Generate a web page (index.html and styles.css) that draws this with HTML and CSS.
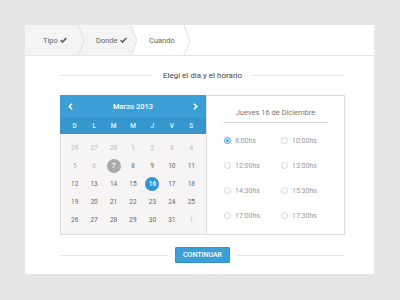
FILE: index.html
```html
<!DOCTYPE html>
<html lang="es">
<head>
<meta charset="utf-8">
<link rel="stylesheet" href="styles.css">
</head>
<body>
<div class="card">
  <nav class="steps">
    <div class="step done">Tipo <svg class="check" width="7" height="6" viewBox="0 0 7 6"><path d="M0.7 3.2 L2.6 5 L6.3 0.9" fill="none" stroke="#555" stroke-width="1.5"/></svg>
      <svg class="chev" width="7" height="31" viewBox="0 0 7 31"><polygon points="0,0 6,15.5 0,31" fill="#f5f4f4"/><polyline points="0,0 6,15.5 0,31" fill="none" stroke="#e0dede" stroke-width="1"/></svg>
    </div>
    <div class="step done">Donde <svg class="check" width="7" height="6" viewBox="0 0 7 6"><path d="M0.7 3.2 L2.6 5 L6.3 0.9" fill="none" stroke="#555" stroke-width="1.5"/></svg>
      <svg class="chev" width="7" height="31" viewBox="0 0 7 31"><polygon points="0,0 6,15.5 0,31" fill="#f5f4f4"/><polyline points="0,0 6,15.5 0,31" fill="none" stroke="#e0dede" stroke-width="1"/></svg>
    </div>
    <div class="step">Cuando
      <svg class="chev" width="7" height="31" viewBox="0 0 7 31"><polygon points="0,0 6,15.5 0,31" fill="#ffffff"/><polyline points="0,0 6,15.5 0,31" fill="none" stroke="#e0dede" stroke-width="1"/></svg>
    </div>
  </nav>
  <div class="content">
    <div class="heading"><span class="rule"></span><h1>Elegi el día y el horario</h1><span class="rule"></span></div>
    <div class="picker">
      <div class="cal">
        <div class="cal-head">
          <svg width="5" height="7" viewBox="0 0 5 7"><path d="M4 0.8 L1.3 3.5 L4 6.2" fill="none" stroke="#fff" stroke-width="1.6"/></svg>
          <span class="month">Marzo 2013</span>
          <svg width="5" height="7" viewBox="0 0 5 7"><path d="M1 0.8 L3.7 3.5 L1 6.2" fill="none" stroke="#fff" stroke-width="1.6"/></svg>
        </div>
        <div class="cal-dow"><span>D</span><span>L</span><span>M</span><span>M</span><span>J</span><span>V</span><span>S</span></div>
        <div class="cal-grid">
          <span class="off">26</span><span class="off">27</span><span class="off">28</span><span class="off">1</span><span class="off">2</span><span class="off">3</span><span class="off">4</span>
          <span class="off">5</span><span class="off">6</span><span><b class="today">7</b></span><span>8</span><span>9</span><span>10</span><span>11</span>
          <span>12</span><span>13</span><span>14</span><span>15</span><span><b class="sel">16</b></span><span>17</span><span>18</span>
          <span>19</span><span>20</span><span>21</span><span>22</span><span>23</span><span>24</span><span>25</span>
          <span>26</span><span>27</span><span>28</span><span>29</span><span>30</span><span>31</span><span class="off">1</span>
        </div>
      </div>
      <div class="times">
        <div class="times-title">Jueves 16 de Diciembre</div>
        <div class="slots">
          <label class="slot"><i class="radio on"></i>8:00hs</label>
          <label class="slot"><i class="radio"></i>10:00hs</label>
          <label class="slot"><i class="radio"></i>12:00hs</label>
          <label class="slot"><i class="radio"></i>13:00hs</label>
          <label class="slot"><i class="radio"></i>14:30hs</label>
          <label class="slot"><i class="radio"></i>15:30hs</label>
          <label class="slot"><i class="radio"></i>17:00hs</label>
          <label class="slot"><i class="radio"></i>17:30hs</label>
        </div>
      </div>
    </div>
    <div class="actions"><span class="rule"></span><button class="btn">CONTINUAR</button><span class="rule"></span></div>
  </div>
</div>
</body>
</html>
```
FILE: styles.css
```css
body {
  margin: 0;
  background: #e6e6e6;
  font-family: Roboto, "Liberation Sans", sans-serif;
}
.card {
  margin: 25px 0 0 25px;
  width: 349px;
  height: 249px;
  background: #fff;
}
.steps {
  display: flex;
  height: 30px;
  border-bottom: 1px solid #e8e6e6;
}
.step {
  position: relative;
  width: 53px;
  padding-left: 18px;
  box-sizing: border-box;
  display: flex;
  align-items: center;
  font-size: 7.5px;
  color: #666;
  white-space: nowrap;
}
.step.done { background: #f5f4f4; }
.check {
  margin-left: 2px;
}
.chev {
  position: absolute;
  left: 100%;
  top: 0;
  z-index: 1;
}
.content {
  padding: 0 29px 0 35px;
}
.heading {
  display: flex;
  align-items: center;
  gap: 10px;
  height: 18px;
  margin-top: 10px;
  margin-bottom: 11px;
}
.rule {
  flex: 1;
  height: 1px;
  background: #e6e4e4;
}
h1 {
  margin: 0;
  font-size: 8px;
  font-weight: 400;
  color: #444;
  white-space: nowrap;
}
.picker {
  display: flex;
  height: 140px;
}
.cal {
  width: 146px;
  display: flex;
  flex-direction: column;
}
.cal-head {
  height: 24px;
  background: #3b9fd6;
  display: flex;
  align-items: center;
  justify-content: space-between;
  padding: 0 8px;
  color: #fff;
}
.month {
  font-size: 7.5px;
  font-weight: 500;
}
.cal-dow {
  height: 16px;
  background: #3797cd;
  display: grid;
  grid-template-columns: repeat(7, 1fr);
  padding: 0 5px;
  align-items: center;
  text-align: center;
  font-size: 6.5px;
  font-weight: 500;
  color: #e4f2fa;
}
.cal-grid {
  flex: 1;
  background: #f6f4f4;
  border-left: 1px solid #dedcdc;
  border-bottom: 1px solid #dedcdc;
  padding: 5px 5px 5px 4px;
  display: grid;
  grid-template-columns: repeat(7, 1fr);
  grid-auto-rows: 18px;
  font-size: 6.5px;
  color: #666;
}
.cal-grid span {
  display: flex;
  align-items: center;
  justify-content: center;
}
.cal-grid .off { color: #bbb; }
.cal-grid b {
  width: 14px;
  height: 14px;
  border-radius: 50%;
  display: flex;
  align-items: center;
  justify-content: center;
  color: #fff;
  font-weight: 500;
}
.cal-grid .today { background: #aaa; }
.cal-grid .sel { background: #2f97d4; }
.times {
  flex: 1;
  border: 1px solid #dcdcdc;
  box-shadow: 0 0 2px rgba(0, 0, 0, 0.06);
  display: flex;
  flex-direction: column;
}
.times-title {
  margin: 12px 16px 0;
  padding-bottom: 4px;
  border-bottom: 1px solid #dcdada;
  font-size: 7.5px;
  line-height: 10px;
  color: #777;
  text-align: center;
}
.slots {
  display: grid;
  grid-template-columns: 57px 57px;
  grid-auto-rows: 25px;
  padding-left: 17px;
  margin-top: 5px;
}
.slot {
  display: flex;
  align-items: center;
  font-size: 7px;
  color: #999;
}
.radio {
  width: 5px;
  height: 5px;
  border: 1px solid #d4d4d4;
  border-radius: 50%;
  margin-right: 4px;
  position: relative;
  background: #fff;
}
.radio.on { border-color: #3b9fd6; }
.radio.on::after {
  content: "";
  position: absolute;
  left: 1px;
  top: 1px;
  width: 3px;
  height: 3px;
  border-radius: 50%;
  background: #3b9fd6;
}
.actions {
  display: flex;
  align-items: center;
  gap: 7px;
  margin-top: 12px;
}
.btn {
  width: 55px;
  height: 16px;
  padding: 0;
  border: 1px solid #3292cc;
  border-radius: 1px;
  background: #3ba0d8;
  color: #fff;
  font-family: Roboto, sans-serif;
  font-size: 7px;
  font-weight: 500;
}
```
